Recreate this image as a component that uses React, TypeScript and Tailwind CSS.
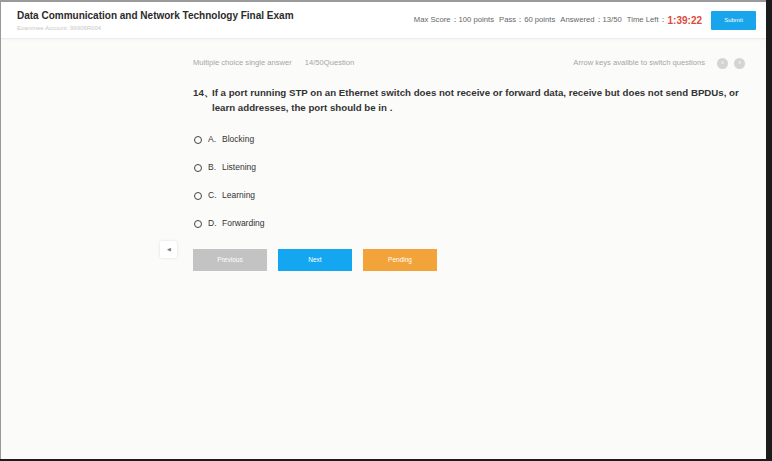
export default function App() {
  const options = [
    { key: "A.", text: "Blocking" },
    { key: "B.", text: "Listening" },
    { key: "C.", text: "Learning" },
    { key: "D.", text: "Forwarding" },
  ];

  return (
    <div className="w-[772px] h-[461px] bg-[#1c1c1c] flex overflow-hidden" style={{ fontFamily: '"Liberation Sans", Arial, sans-serif' }}>
      <div className="w-[766px] h-[459px] bg-[#fbfbfa] border-l border-t-2 border-[#9a9a9a] flex flex-col">
        <header className="h-[37px] bg-white border-b border-[#ececec] flex items-center pl-4 pr-[10px] shadow-[0_1px_2px_rgba(0,0,0,0.03)]">
          <div className="flex flex-col">
            <div className="text-[10px] font-bold text-[#2b2b2b] leading-[13px]">
              Data Communication and Network Technology Final Exam
            </div>
            <div className="text-[6px] text-[#c8c8c8] leading-[8px] mt-[2px]">Examinee Account: 99906R004</div>
          </div>
          <div className="ml-auto flex items-center text-[7.7px] text-[#666]">
            <span>Max Score：</span>
            <span>100 points</span>
            <span className="ml-[5px]">Pass：</span>
            <span>60 points</span>
            <span className="ml-[5px]">Answered：</span>
            <span>13/50</span>
            <span className="ml-[5px]">Time Left：</span>
            <span className="text-[10px] font-bold text-[#e0483a] ml-[1px]">1:39:22</span>
            <button className="ml-[9px] w-[45px] h-[19px] bg-[#19a5ec] text-white text-[6px] rounded-[1px]">Submit</button>
          </div>
        </header>

        <main className="pl-[192px] pr-[21px] pt-[17px] relative flex-1">
          <div className="flex items-center h-[14px] text-[7.6px] text-[#a6a6a6]">
            <span>Multiple choice single answer</span>
            <span className="ml-[13px]">14/50Question</span>
            <span className="ml-auto">Arrow keys availble to switch questions</span>
            <span className="ml-[12px] w-[11px] h-[11px] rounded-full bg-[#d4d4d4] text-white text-[8px] flex items-center justify-center leading-none">‹</span>
            <span className="ml-[6px] w-[11px] h-[11px] rounded-full bg-[#d4d4d4] text-white text-[8px] flex items-center justify-center leading-none">›</span>
          </div>

          <div className="mt-[15px] flex text-[9.7px] font-bold text-[#333] leading-[15px]">
            <span className="w-[19px] shrink-0">14、</span>
            <span>
              If a port running STP on an Ethernet switch does not receive or forward data, receive but does not send BPDUs, or learn addresses, the port should be in .
            </span>
          </div>

          <div className="mt-[18px] flex flex-col gap-[15px]">
            {options.map((o) => (
              <div key={o.key} className="flex items-center h-[13px] text-[8.5px] text-[#333]">
                <span className="w-[8px] h-[8px] rounded-full border-[1.5px] border-[#444] ml-[1px]" />
                <span className="ml-[6px] w-[13px]">{o.key}</span>
                <span className="ml-[1px]">{o.text}</span>
              </div>
            ))}
          </div>

          <div className="mt-[19px] flex gap-[11px]">
            <button className="w-[74px] h-[22px] bg-[#c3c3c3] text-white text-[6.5px]">Previous</button>
            <button className="w-[74px] h-[22px] bg-[#14a6f0] text-white text-[6.5px]">Next</button>
            <button className="w-[74px] h-[22px] bg-[#f2a43a] text-white text-[6.5px]">Pending</button>
          </div>

          <div className="absolute left-[159px] top-[202px] w-[17px] h-[17px] bg-white rounded-[2px] shadow-[0_0_3px_rgba(0,0,0,0.12)] flex items-center justify-center text-[5px] text-[#777]">
            ◀
          </div>
        </main>
      </div>
    </div>
  );
}
